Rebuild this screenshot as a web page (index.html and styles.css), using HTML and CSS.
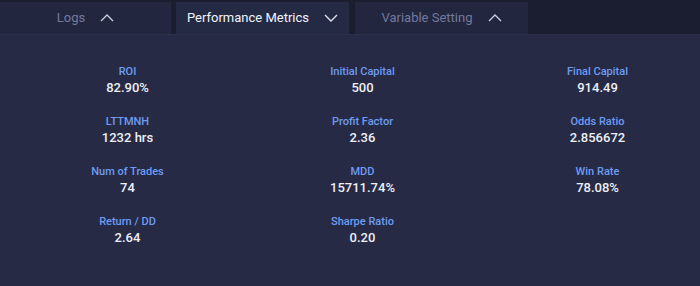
FILE: index.html
```html
<!DOCTYPE html>
<html lang="en">
<head>
    <meta charset="UTF-8">
    <meta name="viewport" content="width=device-width, initial-scale=1.0">
    <title>Performance Metrics</title>
    <link rel="stylesheet" href="styles.css">
</head>
<body>
    <div class="tabs">
        <div class="tab">
            <span class="tab-label">Logs</span>
            <svg class="chevron" viewBox="0 0 14 8"><path d="M1 7 L7 1 L13 7"/></svg>
        </div>
        <div class="tab active">
            <span class="tab-label">Performance Metrics</span>
            <svg class="chevron" viewBox="0 0 14 8"><path d="M1 1 L7 7 L13 1"/></svg>
        </div>
        <div class="tab">
            <span class="tab-label">Variable Setting</span>
            <svg class="chevron" viewBox="0 0 14 8"><path d="M1 7 L7 1 L13 7"/></svg>
        </div>
    </div>

    <div class="panel">
        <div class="metrics">
            <div class="metric"><div class="label">ROI</div><div class="value">82.90%</div></div>
            <div class="metric"><div class="label">Initial Capital</div><div class="value">500</div></div>
            <div class="metric"><div class="label">Final Capital</div><div class="value">914.49</div></div>

            <div class="metric"><div class="label">LTTMNH</div><div class="value">1232 hrs</div></div>
            <div class="metric"><div class="label">Profit Factor</div><div class="value">2.36</div></div>
            <div class="metric"><div class="label">Odds Ratio</div><div class="value">2.856672</div></div>

            <div class="metric"><div class="label">Num of Trades</div><div class="value">74</div></div>
            <div class="metric"><div class="label">MDD</div><div class="value">15711.74%</div></div>
            <div class="metric"><div class="label">Win Rate</div><div class="value">78.08%</div></div>

            <div class="metric"><div class="label">Return / DD</div><div class="value">2.64</div></div>
            <div class="metric"><div class="label">Sharpe Ratio</div><div class="value">0.20</div></div>
        </div>
    </div>
</body>
</html>
```

FILE: styles.css
```css
body {
    margin: 0;
    background: #1c1f33;
    font-family: Roboto, 'Liberation Sans', Arial, sans-serif;
    height: 286px;
    overflow: hidden;
    display: flex;
    flex-direction: column;
}

.tabs {
    display: flex;
    padding-top: 2px;
    height: 32px;
    background: #1b1e31;
}

.tab {
    display: flex;
    align-items: center;
    justify-content: center;
    gap: 15px;
    width: 173px;
    background: #22263f;
    color: #737a9c;
    font-size: 13px;
    margin-right: 6px;
}

.tab:first-child {
    width: 171px;
    margin-right: 5px;
}

.tab.active {
    background: #252a44;
    color: #f2f4fa;
}

.tab-label {
    padding-bottom: 1px;
}

.chevron {
    width: 14px;
    height: 8px;
    fill: none;
    stroke: #c9cde0;
    stroke-width: 1.4;
}

.tab.active .chevron {
    stroke: #dfe2ee;
}

.panel {
    flex: 1;
    background: #262a44;
    border-top: 1px solid #2a2f4a;
    padding: 29px 0 0 10px;
}

.metrics {
    display: grid;
    grid-template-columns: repeat(3, 235px);
    row-gap: 18px;
    text-align: center;
}

.label {
    color: #6e9cf3;
    font-size: 11px;
    line-height: 15px;
    font-weight: 500;
}

.value {
    color: #eef0f6;
    font-size: 13px;
    line-height: 17px;
    font-weight: 500;
}
```
